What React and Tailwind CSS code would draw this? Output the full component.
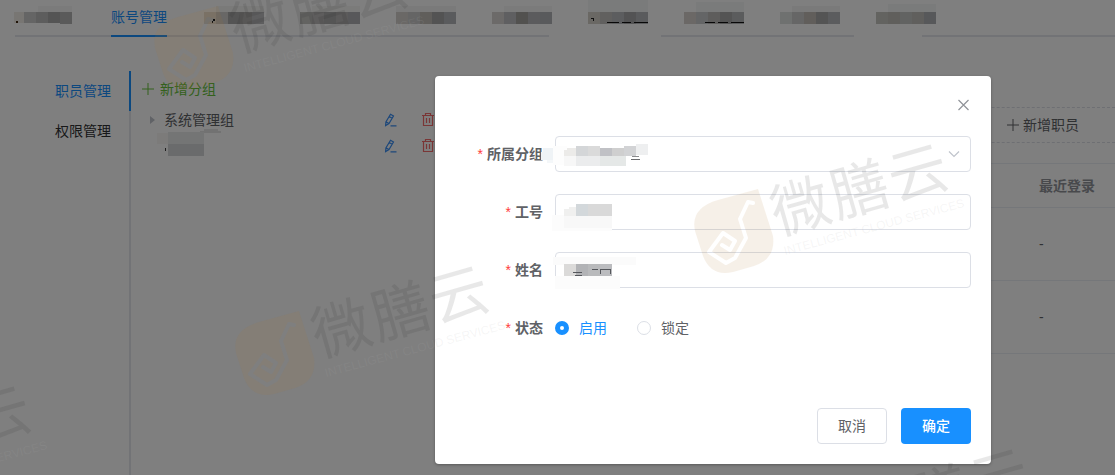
import { useState } from 'react';

// cells: [x, y, width, height, color]
const tabs = [
  {
    id: 'tab-1',
    cells: [
      [23, 6, 34, 6, '#f6f6f6'],
      [-1, 12, 10, 11, '#f0ece6'],
      [9, 12, 12, 11, '#cacaca'],
      [21, 12, 12, 11, '#bababa'],
      [33, 12, 12, 11, '#a8a8a8'],
      [45, 12, 12, 12, '#b4b4b4'],
      [1, 21, 2, 2, '#402810'],
    ],
  },
  { id: 'account', label: '账号管理' },
  {
    id: 'tab-3',
    cells: [
      [9, 6, 48, 6, '#f4f4f2'],
      [-3, 12, 12, 12, '#e8e2d8'],
      [9, 12, 12, 12, '#d0cecc'],
      [21, 12, 12, 12, '#a8a8a8'],
      [33, 12, 12, 12, '#b0aeac'],
      [45, 12, 12, 12, '#bcbcbe'],
      [6, 19, 2, 2, '#202020'],
      [5, 21, 1, 2, '#202020'],
    ],
  },
  {
    id: 'tab-4',
    cells: [
      [9, 6, 48, 6, '#f6f6f4'],
      [-3, 12, 12, 12, '#c6c6c2'],
      [9, 12, 12, 12, '#bcbaba'],
      [21, 12, 12, 12, '#aaaaaa'],
      [33, 12, 12, 12, '#b8b6b6'],
      [45, 12, 12, 12, '#b0b0b4'],
    ],
  },
  {
    id: 'tab-5',
    cells: [
      [-3, 6, 60, 6, '#f4f4f4'],
      [-3, 12, 12, 12, '#d4d0cc'],
      [9, 12, 12, 12, '#cacaca'],
      [21, 12, 12, 12, '#c0bcb6'],
      [33, 12, 12, 12, '#a6a6a6'],
      [45, 12, 12, 12, '#b4b6ba'],
    ],
  },
  {
    id: 'tab-6',
    cells: [
      [9, 6, 48, 6, '#f6f6f6'],
      [-3, 12, 12, 12, '#d8d4d2'],
      [9, 12, 12, 12, '#bebec2'],
      [21, 12, 12, 12, '#a4a29e'],
      [33, 12, 12, 12, '#b6b6ba'],
      [45, 12, 12, 12, '#b2b4b8'],
    ],
  },
  {
    id: 'tab-7',
    cells: [
      [-3, 0, 60, 12, '#f4f6f6'],
      [-3, 12, 12, 12, '#d4d0c8'],
      [9, 12, 12, 12, '#c2c0be'],
      [21, 12, 12, 12, '#b8babe'],
      [33, 12, 12, 12, '#a6a6a8'],
      [45, 12, 12, 12, '#b4b6ba'],
      [0, 18, 3, 1, '#202020'],
      [2, 19, 1, 2, '#202020'],
      [16, 22, 12, 1, '#101010'],
      [31, 22, 9, 1, '#101010'],
      [43, 22, 14, 1, '#101010'],
      [-42, 34, 112, 4, '#ffffff'],
    ],
  },
  {
    id: 'tab-8',
    cells: [
      [9, 2, 48, 10, '#f4f6f6'],
      [-3, 12, 12, 12, '#d6d0cc'],
      [9, 12, 12, 12, '#c8cacc'],
      [21, 12, 12, 12, '#bcbab8'],
      [33, 12, 12, 12, '#a8a8a8'],
      [45, 12, 12, 12, '#b6b8ba'],
      [18, 22, 10, 1, '#101010'],
      [31, 22, 10, 1, '#101010'],
      [44, 22, 13, 1, '#101010'],
    ],
  },
  {
    id: 'tab-9',
    cells: [
      [9, 6, 48, 6, '#f4f4f4'],
      [-3, 12, 12, 12, '#dee2e0'],
      [9, 12, 12, 12, '#cccccc'],
      [21, 12, 12, 12, '#c2bcb6'],
      [33, 12, 12, 12, '#a8a8a8'],
      [45, 12, 12, 12, '#b6b8bc'],
    ],
  },
  {
    id: 'tab-10',
    cells: [
      [9, 4, 48, 8, '#f4f6f6'],
      [-3, 12, 12, 12, '#c6c6c0'],
      [9, 12, 12, 12, '#c0beb8'],
      [21, 12, 12, 12, '#c4c6c4'],
      [33, 12, 12, 12, '#c0beba'],
      [45, 12, 12, 12, '#aeb0b4'],
      [-25, 34, 68, 4, '#ffffff'],
    ],
  },
];

const groupCells = [
  [40, -4, 14, 4, '#e4e4e4'],
  [36, -2, 21, 2, '#e4e4e4'],
  [-7, 0, 12, 11, '#f8f6f4'],
  [4, -1, 36, 12, '#e8eaea'],
  [4, 11, 36, 12, '#d4d6d8'],
  [1, 15, 1, 3, '#404040'],
];

const departmentCells = [
  [-12, 12, 14, 6, '#eff3f6'],
  [-14, 16, 16, 8, '#eff3f6'],
  [-8, 24, 10, 3, '#f4f7f9'],
  [-2, 10, 14, 19, '#fdfdfd'],
  [9, 14, 3, 6, '#ecebe9'],
  [12, 12, 9, 8, '#ecebe9'],
  [21, 10, 12, 10, '#d4d6d8'],
  [33, 10, 12, 10, '#dadada'],
  [45, 12, 12, 8, '#c0c1c5'],
  [57, 12, 12, 8, '#cfcfcf'],
  [69, 10, 12, 10, '#d2d3d5'],
  [81, 8, 12, 11, '#eeeff0'],
  [9, 20, 12, 10, '#f7f7f7'],
  [21, 20, 24, 10, '#ebeced'],
  [45, 20, 26, 10, '#e5e8e7'],
  [77, 20, 7, 1, '#8a8b8e'],
  [76, 23, 9, 1, '#6a6b6e'],
];

const staffNoCells = [
  [-3, 21, 60, 16, '#fcfcfc'],
  [9, 15, 5, 7, '#f0f0ef'],
  [14, 13, 7, 9, '#f0f0ef'],
  [21, 10, 12, 12, '#d3d8db'],
  [33, 10, 24, 12, '#d9d9d9'],
  [9, 22, 48, 12, '#f8f8f8'],
];

const nameCells = [
  [-2, 5, 83, 8, '#fbfbfb'],
  [0, 24, 65, 13, '#fcfcfc'],
  [9, 12, 12, 12, '#dbdad9'],
  [21, 12, 12, 12, '#b2b3b6'],
  [33, 12, 12, 12, '#b9babc'],
  [45, 12, 12, 12, '#bbbcbf'],
  [18, 20, 9, 1, '#55575c'],
  [20, 23, 7, 1, '#55575c'],
  [37, 17, 6, 1, '#55575c'],
  [45, 17, 11, 1, '#55575c'],
  [45, 18, 1, 4, '#55575c'],
  [55, 18, 1, 4, '#55575c'],
];

const Mosaic = ({ cells, className }) => (
  <svg className={`overflow-visible ${className}`} shapeRendering="crispEdges" aria-hidden="true">
    {cells.map(([x, y, w, h, fill], i) => (
      <rect key={i} x={x} y={y} width={w} height={h} fill={fill} />
    ))}
  </svg>
);

const PlusIcon = ({ className }) => (
  <svg className={className} viewBox="0 0 12 12" fill="none" stroke="currentColor" aria-hidden="true">
    <path d="M6 0v12M0 6h12" />
  </svg>
);

const EditIcon = () => (
  <svg className="h-3.5 w-3.5" viewBox="0 0 14 14" fill="none" stroke="currentColor" strokeWidth="1.2" aria-hidden="true">
    <path d="M7.5 1.2 10.5 3 6 10.6 2.6 12.6 2.9 8.9zM6.2 3.4 9.2 5.2M2.9 8.9l3.1 1.7M7.5 12.8h6" />
  </svg>
);

const TrashIcon = () => (
  <svg className="h-3.5 w-3.5" viewBox="0 0 14 14" fill="none" stroke="currentColor" strokeWidth="1.2" aria-hidden="true">
    <path d="M1 2.5h12M4.5 2.5v-2h5v2M2.5 2.5v10h9v-10M5.5 5v5M8.5 5v5" />
  </svg>
);

const RowActions = () => (
  <div className="flex gap-6">
    <button type="button" aria-label="编辑" className="text-[#3a8ff5]"><EditIcon /></button>
    <button type="button" aria-label="删除" className="text-[#f56c6c]"><TrashIcon /></button>
  </div>
);

const FormRow = ({ label, htmlFor, children }) => (
  <div className="flex h-9 items-center">
    <label htmlFor={htmlFor} className="w-[100px] shrink-0 pr-3 text-right font-bold">
      <span className="mr-1 font-normal text-[#ff3b3b]">*</span>{label}
    </label>
    <div className="relative flex-1">{children}</div>
  </div>
);

const Watermark = ({ x, y }) => (
  <g transform={`translate(${x} ${y})`}>
    <path
      d="M64 1 24 12Q-4 20 1 43L9 68Q17 89 39 84L60 78Q82 71 79 48Z"
      fill="#af7332"
      fillOpacity="0.11"
      mask="url(#logo-mask)"
    />
    <g transform="translate(84 47) rotate(-16)" fill="#1c1c1c" fillOpacity="0.1" fontSize="59" fontFamily="'Noto Sans CJK SC', sans-serif">
      <text x="0">微</text>
      <text x="61">膳</text>
      <text x="122">云</text>
    </g>
    <text transform="translate(91 67) rotate(-15)" fill="#b3b3b3" fillOpacity="0.12" fontSize="12" fontFamily="'Liberation Sans', sans-serif">
      INTELLIGENT CLOUD SERVICES
    </text>
  </g>
);

const marks = [[154, 5], [694, 188], [235, 310], [-223, 430], [775, 493]];

const inputClass = 'block h-9 w-full rounded border border-[#dcdfe6] bg-white px-4 outline-none';

export default function App() {
  const [status, setStatus] = useState('enabled');

  return (
    <div className="relative flex min-h-screen flex-col overflow-hidden bg-white font-['Liberation_Sans','Noto_Sans_CJK_SC',sans-serif] text-sm text-[#606266]">
      <nav className="ml-[15px] flex h-[37px] gap-10 border-b-2 border-[#e4e7ed]">
        {tabs.map((tab) =>
          tab.label ? (
            <a key={tab.id} href="#account" className="-mb-0.5 h-[37px] shrink-0 border-b-2 border-[#1890ff] leading-[34px] text-[#1890ff]">
              {tab.label}
            </a>
          ) : (
            <Mosaic key={tab.id} cells={tab.cells} className="h-6 w-14 shrink-0" />
          )
        )}
      </nav>

      <main className="mt-[34px] flex flex-1">
        <nav className="flex w-[131px] shrink-0 flex-col text-right leading-10">
          <a href="#staff" className="border-r-2 border-[#1890ff] pr-[18px] text-[#1890ff]">职员管理</a>
          <a href="#permission" className="border-r-2 border-[#e4e7ed] pr-[18px] text-[#303133]">权限管理</a>
          <div className="flex-1 border-r-2 border-[#e4e7ed]" />
        </nav>

        <aside className="w-[304px] shrink-0 pl-[11px]">
          <button type="button" className="flex h-9 items-center gap-1.5 text-[#67c23a]">
            <PlusIcon className="h-3 w-3" />
            新增分组
          </button>
          <ul>
            <li className="flex h-[26px] items-center justify-between">
              <span className="flex items-center gap-[9px] pl-2">
                <svg className="h-2 w-[5px]" viewBox="0 0 5 8" fill="#c0c4cc" aria-hidden="true"><path d="M0 0 5 4 0 8z" /></svg>
                系统管理组
              </span>
              <RowActions />
            </li>
            <li className="flex h-[26px] items-start justify-between pl-[22px]">
              <Mosaic cells={groupCells} className="h-6 w-10" />
              <div className="self-center"><RowActions /></div>
            </li>
          </ul>
        </aside>

        <section className="flex-1 pt-9">
          <button type="button" className="flex h-9 w-full items-center justify-end gap-1 border-y border-dashed border-[#dcdfe6] pr-9">
            <PlusIcon className="h-3 w-3" />
            新增职员
          </button>
          <table className="mt-5 w-full border-t border-[#ebeef5] text-left">
            <thead>
              <tr className="h-11 border-b border-[#ebeef5] text-[#909399]">
                <td />
                <th className="w-24 pl-5">最近登录</th>
              </tr>
            </thead>
            <tbody>
              {['r1', 'r2'].map((row) => (
                <tr key={row} className="h-[73px] border-b border-[#ebeef5]">
                  <td />
                  <td className="pl-5">-</td>
                </tr>
              ))}
            </tbody>
          </table>
        </section>
      </main>

      {/* Dialog */}
      <div className="absolute inset-0 flex items-start justify-end bg-black/50 pt-[76px] pr-[124px]">
        <form role="dialog" className="w-full max-w-[556px] rounded-sm bg-white px-5 pb-5 shadow-[0_1px_3px_rgba(0,0,0,0.3)]" onSubmit={(e) => e.preventDefault()}>
          <div className="flex h-[60px] items-center justify-end">
            <button type="button" aria-label="关闭" className="text-[#909399]">
              <svg className="h-4 w-4" viewBox="0 0 16 16" fill="none" stroke="currentColor" strokeWidth="1.2"><path d="m3.5 2 10 10M13.5 2l-10 10" /></svg>
            </button>
          </div>

          <div className="flex flex-col gap-[22px]">
            <FormRow label="所属分组" htmlFor="group">
              <select id="group" className={`${inputClass} appearance-none`} />
              <svg className="pointer-events-none absolute top-3.5 right-[11px] h-2 w-3" viewBox="0 0 12 8" fill="none" stroke="#c0c4cc" strokeWidth="1.2" aria-hidden="true"><path d="m1 1.5 5 5 5-5" /></svg>
              <Mosaic cells={departmentCells} className="pointer-events-none absolute top-0 left-0 h-9 w-24" />
            </FormRow>
            <FormRow label="工号" htmlFor="staff-no">
              <input id="staff-no" type="text" className={inputClass} />
              <Mosaic cells={staffNoCells} className="pointer-events-none absolute top-0 left-0 h-9 w-24" />
            </FormRow>
            <FormRow label="姓名" htmlFor="staff-name">
              <input id="staff-name" type="text" className={inputClass} />
              <Mosaic cells={nameCells} className="pointer-events-none absolute top-0 left-0 h-9 w-24" />
            </FormRow>
            <FormRow label="状态" htmlFor="enabled">
              <div className="flex gap-[30px]">
                {[['enabled', '启用'], ['locked', '锁定']].map(([value, text]) => (
                  <label key={value} className="flex items-center gap-2.5 has-checked:text-[#1890ff]">
                    <input
                      id={value}
                      type="radio"
                      name="status"
                      checked={status === value}
                      onChange={() => setStatus(value)}
                      className="h-3.5 w-3.5 appearance-none rounded-full border border-[#dcdfe6] bg-white checked:border-5 checked:border-[#1890ff]"
                    />
                    {text}
                  </label>
                ))}
              </div>
            </FormRow>
          </div>

          <div className="mt-[62px] flex justify-end gap-3.5">
            <button type="button" className="h-9 w-[70px] rounded border border-[#dcdfe6] bg-white">取消</button>
            <button type="submit" className="h-9 w-[70px] rounded bg-[#1890ff] font-medium text-white">确定</button>
          </div>
        </form>
      </div>

      <svg className="pointer-events-none absolute inset-0 h-full w-full" aria-hidden="true">
        <mask id="logo-mask" maskUnits="userSpaceOnUse" x="-5" y="-5" width="95" height="100">
          <rect x="-5" y="-5" width="95" height="100" fill="#fff" />
          <path d="M59 15 54 14 46 31 52 50 41 70 32 75 15 64 29 45 41 53 36 62 28 57" fill="none" stroke="#000" strokeWidth="4" strokeLinejoin="round" strokeLinecap="round" />
        </mask>
        {marks.map(([x, y]) => (
          <Watermark key={`${x}-${y}`} x={x} y={y} />
        ))}
      </svg>
    </div>
  );
}
